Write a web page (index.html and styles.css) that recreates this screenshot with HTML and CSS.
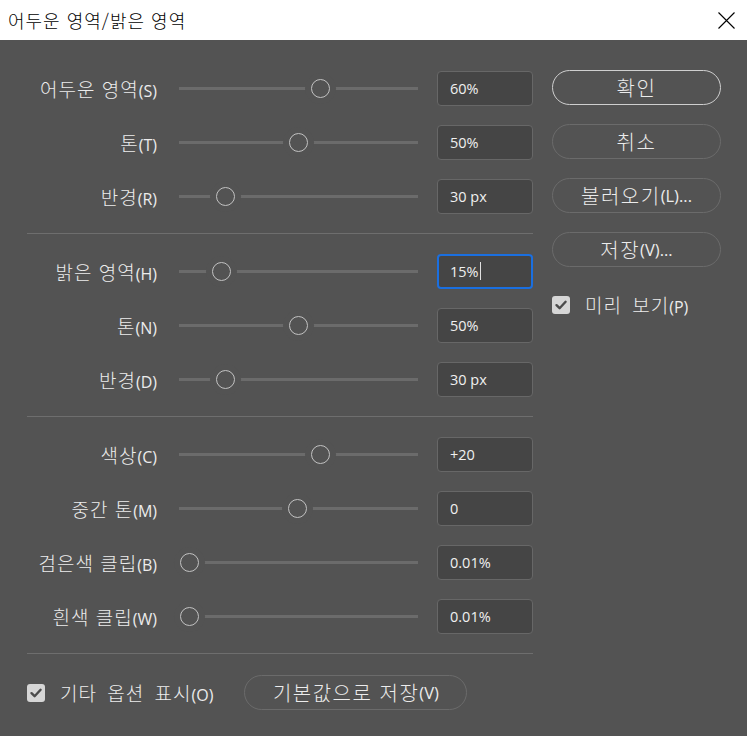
FILE: index.html
```html
<!DOCTYPE html>
<html lang="ko">
<head>
<meta charset="utf-8">
<title>어두운 영역/밝은 영역</title>
<link rel="stylesheet" href="styles.css">
</head>
<body>
<div class="window">
  <header class="titlebar">
    <span class="title">어두운 영역/밝은 영역</span>
    <svg class="close" viewBox="0 0 17 17" width="17" height="17"><path d="M0.5 0.5L16.5 16.5M16.5 0.5L0.5 16.5" stroke="#000" stroke-width="1.1" fill="none"/></svg>
  </header>
  <main class="content">
    <section class="controls">
      <div class="row">
        <span class="label">어두운 영역<span class="k">(S)</span></span>
        <div class="slider"><span class="thumb" style="left:132px"></span></div>
        <div class="field">60%</div>
      </div>
      <div class="row">
        <span class="label">톤<span class="k">(T)</span></span>
        <div class="slider"><span class="thumb" style="left:110px"></span></div>
        <div class="field">50%</div>
      </div>
      <div class="row">
        <span class="label">반경<span class="k">(R)</span></span>
        <div class="slider"><span class="thumb" style="left:37px"></span></div>
        <div class="field">30 px</div>
      </div>
      <hr class="sep">
      <div class="row">
        <span class="label">밝은 영역<span class="k">(H)</span></span>
        <div class="slider"><span class="thumb" style="left:33px"></span></div>
        <div class="field active">15%<span class="caret"></span></div>
      </div>
      <div class="row">
        <span class="label">톤<span class="k">(N)</span></span>
        <div class="slider"><span class="thumb" style="left:110px"></span></div>
        <div class="field">50%</div>
      </div>
      <div class="row">
        <span class="label">반경<span class="k">(D)</span></span>
        <div class="slider"><span class="thumb" style="left:37px"></span></div>
        <div class="field">30 px</div>
      </div>
      <hr class="sep">
      <div class="row">
        <span class="label">색상<span class="k">(C)</span></span>
        <div class="slider"><span class="thumb" style="left:132px"></span></div>
        <div class="field">+20</div>
      </div>
      <div class="row">
        <span class="label">중간 톤<span class="k">(M)</span></span>
        <div class="slider"><span class="thumb" style="left:109px"></span></div>
        <div class="field">0</div>
      </div>
      <div class="row">
        <span class="label">검은색 클립<span class="k">(B)</span></span>
        <div class="slider"><span class="thumb" style="left:1px"></span></div>
        <div class="field">0.01%</div>
      </div>
      <div class="row">
        <span class="label">흰색 클립<span class="k">(W)</span></span>
        <div class="slider"><span class="thumb" style="left:1px"></span></div>
        <div class="field">0.01%</div>
      </div>
      <hr class="sep">
    </section>
    <aside class="actions">
      <button class="btn primary">확인</button>
      <button class="btn">취소</button>
      <button class="btn">불러오기<span class="k">(L)...</span></button>
      <button class="btn">저장<span class="k">(V)...</span></button>
      <label class="check preview">
        <span class="box"><svg viewBox="0 0 18 18" width="18" height="18"><path d="M4.5 9.2L7.6 12.2L13.6 5.8" stroke="#4b4b4b" stroke-width="2.4" fill="none" stroke-linecap="round" stroke-linejoin="round"/></svg></span>
        <span class="check-text">미리 보기<span class="k">(P)</span></span>
      </label>
    </aside>
  </main>
  <footer class="footer">
    <label class="check">
      <span class="box"><svg viewBox="0 0 18 18" width="18" height="18"><path d="M4.5 9.2L7.6 12.2L13.6 5.8" stroke="#4b4b4b" stroke-width="2.4" fill="none" stroke-linecap="round" stroke-linejoin="round"/></svg></span>
      <span class="check-text">기타 옵션 표시<span class="k">(O)</span></span>
    </label>
    <button class="btn wide">기본값으로 저장<span class="k">(V)</span></button>
  </footer>
</div>
</body>
</html>
```
FILE: styles.css
```css
* { box-sizing: border-box; }
html, body { margin: 0; padding: 0; }
body {
  width: 747px;
  height: 736px;
  overflow: hidden;
  background: #535353;
  font-family: "Noto Sans CJK KR", "Open Sans", sans-serif;
}
.window { width: 747px; height: 736px; background: #535353; }

.titlebar {
  height: 40px;
  background: #ffffff;
  display: flex;
  align-items: center;
  justify-content: space-between;
  padding: 0 12px 0 8px;
}
.title {
  font-size: 18px;
  letter-spacing: 1px;
  color: #000;
  font-weight: 300;
}
.close { display: block; }

.content {
  display: flex;
  padding: 21px 0 0 27px;
}
.controls { width: 506px; }
.actions {
  width: 169px;
  margin-left: 19px;
  display: flex;
  flex-direction: column;
  padding-top: 9px;
}

.row {
  display: flex;
  align-items: center;
  height: 54px;
}
.label {
  width: 130px;
  text-align: right;
  color: #ececec;
  font-size: 19px;
  font-weight: 300;
  letter-spacing: 1px;
  white-space: nowrap;
}
.k {
  font-family: "Open Sans", "Noto Sans", sans-serif;
  font-weight: 500;
  font-size: 16px;
  letter-spacing: 0;
}

.slider {
  position: relative;
  width: 239px;
  height: 19px;
  margin-left: 22px;
  background: linear-gradient(#6b6b6b, #6b6b6b) center / 100% 3px no-repeat;
}
.thumb {
  position: absolute;
  top: 0;
  width: 19px;
  height: 19px;
  border: 1.5px solid #c2c2c2;
  border-radius: 50%;
  background: #535353;
  box-shadow: 0 0 0 6px #535353;
}

.field {
  margin-left: 19px;
  width: 96px;
  height: 35px;
  border: 1px solid #676767;
  border-radius: 4px;
  background: #454545;
  color: #f0f0f0;
  font-family: "Open Sans", "Noto Sans", sans-serif;
  font-size: 14.5px;
  display: flex;
  align-items: center;
  padding-left: 12px;
}
.field.active {
  border: 2px solid #1a6fe0;
  padding-left: 11px;
}
.caret {
  display: inline-block;
  width: 1px;
  height: 18px;
  background: #e0e0e0;
  margin-left: 1px;
}

.sep {
  border: 0;
  height: 1px;
  background: #6e6e6e;
  margin: 10px 0;
}

.btn {
  height: 35px;
  width: 169px;
  border: 1px solid #6b6b6b;
  border-radius: 18px;
  background: transparent;
  color: #ececec;
  font-family: "Noto Sans CJK KR", "Open Sans", sans-serif;
  font-size: 20px;
  font-weight: 300;
  letter-spacing: 1.5px;
  padding: 0;
  display: flex;
  align-items: center;
  justify-content: center;
  margin-bottom: 19px;
}
.btn .k { font-size: 16.5px; letter-spacing: 0; }
.btn.primary { border: 1.5px solid #cfcfcf; }

.check {
  display: flex;
  align-items: center;
  color: #ececec;
  font-size: 19px;
  font-weight: 300;
  letter-spacing: 1px;
  word-spacing: 4px;
}
.preview { margin-top: 5px; }
.box {
  width: 18px;
  height: 18px;
  border-radius: 3px;
  background: #d6d6d6;
  margin-right: 15px;
  display: block;
  flex: none;
}
.box svg { display: block; }
.check-text { white-space: nowrap; }

.footer {
  display: flex;
  align-items: center;
  padding: 11px 0 0 27px;
}
.btn.wide {
  width: 223px;
  margin: 0 0 0 31px;
}
```
